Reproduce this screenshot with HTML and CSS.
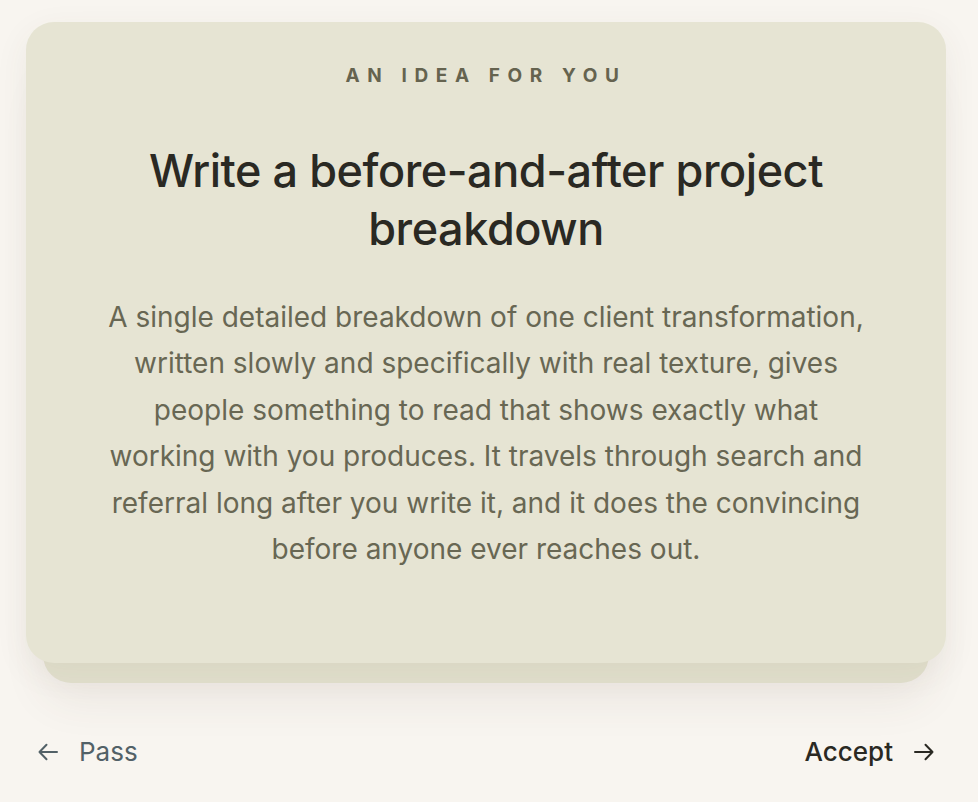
FILE: index.html
```html
<!DOCTYPE html>
<html lang="en">
<head>
<meta charset="utf-8">
<title>An idea for you</title>
<link rel="stylesheet" href="styles.css">
</head>
<body>
<main class="page">
  <section class="stack">
    <article class="card">
      <p class="eyebrow">An idea for you</p>
      <h1 class="title">Write a before-and-after project breakdown</h1>
      <p class="body">A single detailed breakdown of one client transformation, written slowly and specifically with real texture, gives people something to read that shows exactly what working with you produces. It travels through search and referral long after you write it, and it does the convincing before anyone ever reaches out.</p>
    </article>
  </section>
  <nav class="actions">
    <button class="btn btn-pass">
      <svg class="arrow" viewBox="0 0 20 20" width="20" height="20" aria-hidden="true"><path d="M19 10H1.5M8.5 2.8 1.5 10l7 7.2" fill="none" stroke="currentColor" stroke-width="2" stroke-linecap="round" stroke-linejoin="round"/></svg>
      <span>Pass</span>
    </button>
    <button class="btn btn-accept">
      <span>Accept</span>
      <svg class="arrow" viewBox="0 0 20 20" width="20" height="20" aria-hidden="true"><path d="M1 10h17.5M11.5 2.8l7 7.2-7 7.2" fill="none" stroke="currentColor" stroke-width="2" stroke-linecap="round" stroke-linejoin="round"/></svg>
    </button>
  </nav>
</main>
</body>
</html>
```
FILE: styles.css
```css
html, body {
  margin: 0;
  padding: 0;
  background: #f8f5f0;
}
body {
  font-family: Inter, "Noto Sans", "Liberation Sans", sans-serif;
  -webkit-font-smoothing: antialiased;
}
.page {
  padding: 22px 32px 0 26px;
}
.stack {
  position: relative;
  padding-bottom: 20px;
}
.stack::before {
  content: "";
  position: absolute;
  left: 17px;
  right: 17px;
  top: 40px;
  bottom: 0;
  background: #e2e0cd;
  border-radius: 28px;
  box-shadow: 0 18px 44px rgba(90, 70, 50, 0.08);
}
.card {
  position: relative;
  background: #e6e4d3;
  border-radius: 28px;
  padding: 45px 72px 91px;
  text-align: center;
  box-shadow: 0 10px 34px rgba(90, 70, 50, 0.07);
}
.eyebrow {
  margin: 0;
  font-size: 19px;
  line-height: 18px;
  font-weight: 700;
  letter-spacing: 0.4em;
  text-transform: uppercase;
  color: #65634f;
}
.title {
  margin: 57px 0 0;
  font-size: 45px;
  line-height: 58px;
  font-weight: 500;
  letter-spacing: -0.01em;
  color: #2a2923;
}
.body {
  margin: 36px 0 0;
  font-size: 28px;
  line-height: 46.4px;
  font-weight: 400;
  color: #686753;
}
.actions {
  display: flex;
  justify-content: space-between;
  align-items: center;
  padding: 49px 12px 0 12px;
}
.btn {
  display: flex;
  align-items: center;
  gap: 21px;
  background: none;
  border: 0;
  padding: 0;
  font-family: inherit;
  font-size: 26px;
  line-height: 40px;
  cursor: pointer;
}
.btn-pass {
  color: #526167;
}
.btn-accept {
  color: #2a2923;
  font-weight: 500;
}
.arrow {
  display: block;
}
```
